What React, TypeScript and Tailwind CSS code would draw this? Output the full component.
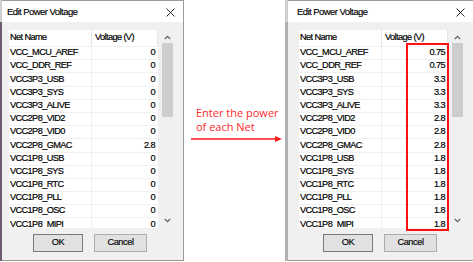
import React from "react";

const names = [
  "VCC_MCU_AREF",
  "VCC_DDR_REF",
  "VCC3P3_USB",
  "VCC3P3_SYS",
  "VCC3P3_ALIVE",
  "VCC2P8_VID2",
  "VCC2P8_VID0",
  "VCC2P8_GMAC",
  "VCC1P8_USB",
  "VCC1P8_SYS",
  "VCC1P8_RTC",
  "VCC1P8_PLL",
  "VCC1P8_OSC",
  "VCC1P8_MIPI",
];

const leftVals = ["0", "0", "0", "0", "0", "0", "0", "2.8", "0", "0", "0", "0", "0", "0"];
const rightVals = ["0.75", "0.75", "3.3", "3.3", "3.3", "2.8", "2.8", "2.8", "1.8", "1.8", "1.8", "1.8", "1.8", "1.8"];

const uiFont = { fontFamily: '"Liberation Sans", Arial, sans-serif' };

function Chevron({ up }: { up?: boolean }) {
  return (
    <svg width="7" height="5" viewBox="0 0 7 5">
      <polyline
        points={up ? "0.8,4 3.5,1.3 6.2,4" : "0.8,1 3.5,3.7 6.2,1"}
        fill="none"
        stroke="#606060"
        strokeWidth="1.2"
      />
    </svg>
  );
}

function Dialog({ values, highlight, left }: { values: string[]; highlight?: boolean; left?: boolean }) {
  return (
    <div className="flex shrink-0 h-[262px]" style={uiFont}>
      {/* left edge strip */}
      <div className={`flex flex-col h-[261px] ${left ? "w-[2px]" : "w-[3px]"}`}>
        <div className="h-[22px] bg-[#cfcfcf]" />
        <div className={`flex-1 ${left ? "bg-[#6e5a6e]" : "bg-[#b0b0b0]"}`} />
      </div>
      <div
        className={`relative h-[261px] flex flex-col bg-[#f0f0f0] border-t border-r border-b border-[#9a9a9a] ${
          left ? "w-[182px]" : "w-[186px]"
        }`}
      >
        {/* title bar */}
        <div className={`h-[21px] bg-white flex items-center justify-between pr-[8px] ${left ? "pl-[5px]" : "pl-[9px]"}`}>
          <span className="pt-[1px] text-[9.5px] tracking-[-0.55px] text-black [-webkit-text-stroke:0.15px_#000]">
            Edit Power Voltage
          </span>
          <svg width="9" height="9" viewBox="0 0 9 9" className="mt-[1px]">
            <path d="M0.5 0.5 L8.5 8.5 M8.5 0.5 L0.5 8.5" stroke="#111" strokeWidth="0.9" />
          </svg>
        </div>
        {/* list */}
        <div className={`mt-[8px] w-[167px] h-[198px] flex bg-white overflow-hidden ${left ? "ml-[7px]" : "ml-[11px]"}`}>
          <div className="w-[149px] flex flex-col text-[9.2px] tracking-[-0.6px] text-black [-webkit-text-stroke:0.2px_#000]">
            <div className="h-[17px] shrink-0 flex items-center border-b border-[#f0f0f0]">
              <div className="w-[83px] h-full flex items-center pl-[1px] border-r border-[#e5e5e5]">Net Name</div>
              <div className="w-[66px] h-full flex items-center pl-[3px] border-r border-[#e5e5e5]">Voltage (V)</div>
            </div>
            {names.map((n, i) => (
              <div key={n} className="h-[13.2px] shrink-0 flex items-center border-b border-[#f0f0f0]">
                <div className="w-[83px] h-full flex items-center pl-[1px] border-r border-[#f0f0f0]">{n}</div>
                <div className="w-[66px] h-full flex items-center justify-end pr-[3px]">{values[i]}</div>
              </div>
            ))}
          </div>
          {/* scrollbar */}
          <div className="w-[18px] h-full bg-[#f0f0f0] flex flex-col items-center">
            <div className="h-[13px] w-full flex items-center justify-center pt-[2px]">
              <Chevron up />
            </div>
            <div className="w-[11px] h-[74px] bg-[#cdcdcd]" />
            <div className="flex-1" />
            <div className="h-[14px] w-full flex items-center justify-center pb-[1px]">
              <Chevron />
            </div>
          </div>
        </div>
        {/* buttons */}
        <div
          className={`mt-[6px] flex gap-[11px] text-[9.2px] tracking-[-0.4px] text-black [-webkit-text-stroke:0.15px_#000] ${
            left ? "pl-[31px]" : "pl-[35px]"
          }`}
        >
          <div className="w-[50px] h-[18px] bg-[#e1e1e1] border border-[#7a7a7a] flex items-center justify-center">OK</div>
          <div className="w-[53px] h-[18px] bg-[#e1e1e1] border border-[#adadad] flex items-center justify-center">Cancel</div>
        </div>
        {highlight && (
          <div className="absolute left-[118px] top-[42px] w-[43px] h-[188px] border-2 border-[#ff1010]" />
        )}
      </div>
    </div>
  );
}

export default function App() {
  return (
    <div className="w-[473px] h-[262px] bg-white flex overflow-hidden">
      <Dialog values={leftVals} left />
      <div className="w-[101px] shrink-0 flex flex-col pt-[106px] pl-[7px]">
        <div
          className="pl-[5px] text-[11px] leading-[14px] text-[#ff2a2a]"
          style={{ fontFamily: '"Open Sans", "Liberation Sans", sans-serif' }}
        >
          <div>Enter the power</div>
          <div>of each Net</div>
        </div>
        <svg width="92" height="8" viewBox="0 0 92 8" className="mt-[1px]">
          <line x1="0" y1="4" x2="86" y2="4" stroke="#ff1a1a" strokeWidth="1.3" />
          <polygon points="84,1 91,4 84,7" fill="#ff1a1a" />
        </svg>
      </div>
      <Dialog values={rightVals} highlight />
    </div>
  );
}
